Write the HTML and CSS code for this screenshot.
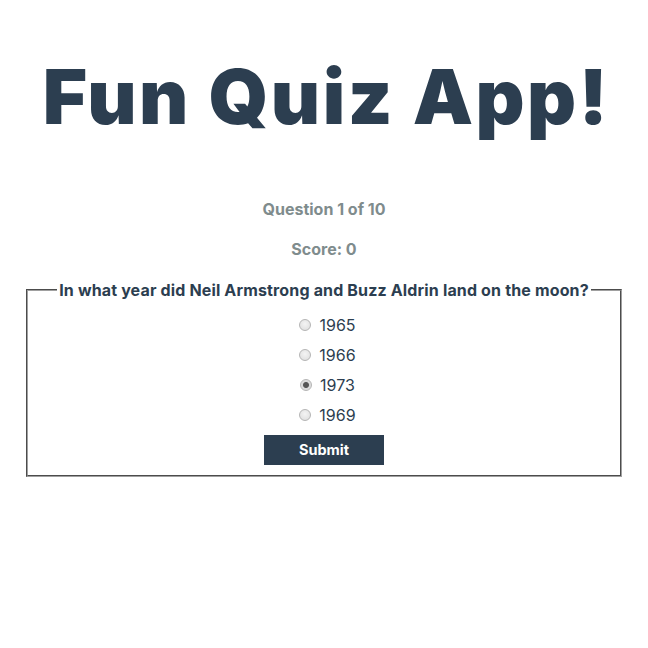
FILE: index.html
```html
<!DOCTYPE html>
<html>
<head>
<meta charset="utf-8">
<link rel="stylesheet" href="styles.css">
</head>
<body>
<div class="app">
  <h1 class="title">Fun Quiz App!</h1>
  <p class="meta">Question 1 of 10</p>
  <p class="meta">Score: 0</p>
  <form class="quiz">
    <fieldset class="box">
      <legend class="question">In what year did Neil Armstrong and Buzz Aldrin land on the moon?</legend>
      <label class="option"><input type="radio" name="a"> 1965</label>
      <label class="option"><input type="radio" name="a"> 1966</label>
      <label class="option"><input type="radio" name="a" checked> 1973</label>
      <label class="option"><input type="radio" name="a"> 1969</label>
      <button type="button" class="submit">Submit</button>
    </fieldset>
  </form>
</div>
</body>
</html>
```
FILE: styles.css
```css
body {
  margin: 8px;
  font-family: Inter, "Liberation Sans", sans-serif;
  color: #2c3e50;
}
.app {
  max-width: 600px;
  margin: 0 auto;
  text-align: center;
}
.title {
  font-family: Inter, sans-serif;
  font-weight: 900;
  font-size: 76px;
  margin: 47px 0 61px;
  padding-left: 5px;
  line-height: 1.1;
  letter-spacing: 2.5px;
}
.meta {
  color: #7f8c8d;
  font-weight: 700;
  font-size: 16px;
  margin: 0 0 21px;
  line-height: 19px;
}
.quiz {
  margin: 1px 0 0;
}
.box {
  margin: 0 2px;
  padding: 10px 10px 10px;
  border: 2px groove #a0a0a0;
  display: flex;
  flex-direction: column;
  align-items: center;
}
.question {
  font-weight: 700;
  font-size: 16px;
  letter-spacing: 0.15px;
  padding: 0 2px;
}
.option {
  display: flex;
  align-items: center;
  height: 30px;
  font-size: 16px;
  font-weight: 400;
  margin-left: 7px;
}
.option input {
  appearance: none;
  -webkit-appearance: none;
  width: 12px;
  height: 12px;
  margin: 0 8px 0 0;
  border: 1px solid #b5b5b5;
  border-radius: 50%;
  background: radial-gradient(circle at 50% 40%, #f4f4f4 0%, #dcdcdc 100%);
}
.option input:checked {
  background: radial-gradient(circle, #555 0 2.5px, #d8d8d8 3.5px, #eaeaea 100%);
}
.submit {
  margin-top: 5px;
  width: 120px;
  height: 30px;
  border: none;
  background: #2c3e50;
  color: #fff;
  font-family: Inter, sans-serif;
  font-weight: 700;
  font-size: 14.5px;
}
```
